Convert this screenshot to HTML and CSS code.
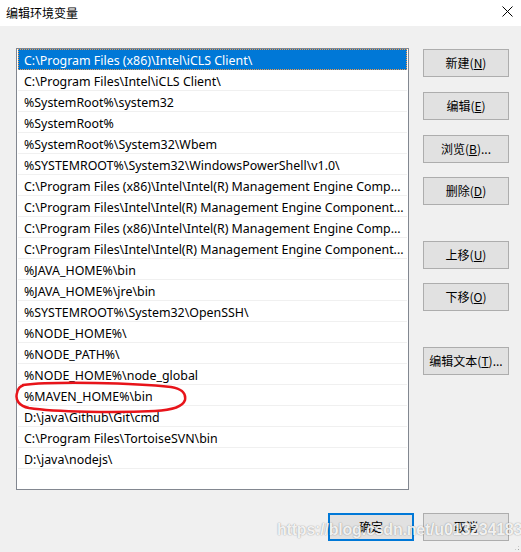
FILE: index.html
```html
<!DOCTYPE html>
<html lang="zh-CN">
<head>
<meta charset="utf-8">
<title>编辑环境变量</title>
<link rel="stylesheet" href="styles.css">
</head>
<body>
<div class="window">
  <div class="titlebar">
    <span class="title">编辑环境变量</span>
    <svg class="close" width="11" height="11" viewBox="0 0 11 11"><path d="M0.5 0.5 L10.5 10.5 M10.5 0.5 L0.5 10.5" stroke="#000" stroke-width="1" fill="none"/></svg>
  </div>
  <div class="body">
    <div class="main">
      <div class="listbox">
        <div class="row selected">C:\Program Files (x86)\Intel\iCLS Client\</div>
        <div class="row">C:\Program Files\Intel\iCLS Client\</div>
        <div class="row">%SystemRoot%\system32</div>
        <div class="row">%SystemRoot%</div>
        <div class="row">%SystemRoot%\System32\Wbem</div>
        <div class="row">%SYSTEMROOT%\System32\WindowsPowerShell\v1.0\</div>
        <div class="row">C:\Program Files (x86)\Intel\Intel(R) Management Engine Comp...</div>
        <div class="row">C:\Program Files\Intel\Intel(R) Management Engine Component...</div>
        <div class="row">C:\Program Files (x86)\Intel\Intel(R) Management Engine Comp...</div>
        <div class="row">C:\Program Files\Intel\Intel(R) Management Engine Component...</div>
        <div class="row">%JAVA_HOME%\bin</div>
        <div class="row">%JAVA_HOME%\jre\bin</div>
        <div class="row">%SYSTEMROOT%\System32\OpenSSH\</div>
        <div class="row">%NODE_HOME%\</div>
        <div class="row">%NODE_PATH%\</div>
        <div class="row">%NODE_HOME%\node_global</div>
        <div class="row">%MAVEN_HOME%\bin</div>
        <div class="row">D:\java\Github\Git\cmd</div>
        <div class="row">C:\Program Files\TortoiseSVN\bin</div>
        <div class="row">D:\java\nodejs\</div>
        <svg class="mark" width="180" height="40" viewBox="0 0 180 40">
          <path d="M8 5 C 40 1, 120 3, 156 7 C 168 9, 171 14, 170 20 C 168 26, 160 30, 140 31 C 100 33, 40 32, 14 28 C 4 26, 0 20, 2 13 C 3 8, 5 6, 9 5" stroke="#e8141a" stroke-width="2.5" fill="none" stroke-linecap="round"/>
        </svg>
      </div>
      <div class="buttons">
        <button class="btn b1">新建(<u>N</u>)</button>
        <button class="btn b2">编辑(<u>E</u>)</button>
        <button class="btn b3">浏览(<u>B</u>)...</button>
        <button class="btn b4">删除(<u>D</u>)</button>
        <button class="btn b5">上移(<u>U</u>)</button>
        <button class="btn b6">下移(<u>O</u>)</button>
        <button class="btn b7">编辑文本(<u>T</u>)...</button>
      </div>
    </div>
    <div class="footer">
      <button class="btn default">确定</button>
      <button class="btn">取消</button>
    </div>
    <div class="watermark">https://blog.csdn.net/u013234183</div>
    <div class="grip"></div>
  </div>
</div>
</body>
</html>
```

FILE: styles.css
```css
html, body {
  margin: 0;
  padding: 0;
  background: #f0f0f0;
}
body {
  font-family: "Noto Sans", "Noto Sans CJK SC", sans-serif;
  font-size: 12px;
  color: #000;
}
.window {
  width: 521px;
  height: 552px;
  display: flex;
  flex-direction: column;
  overflow: hidden;
}
.titlebar {
  height: 26px;
  background: #fff;
  display: flex;
  align-items: center;
  justify-content: space-between;
  padding: 0 8px 0 6px;
}
.title {
  font-family: "Noto Sans CJK SC", sans-serif;
  font-size: 12px;
  line-height: 12px;
}
.close {
  display: block;
  margin-top: -3px;
}
.body {
  position: relative;
  flex: 1;
  background: #f0f0f0;
}
.main {
  display: flex;
  padding-top: 22px;
}
.listbox {
  position: relative;
  margin-left: 16px;
  width: 391px;
  height: 440px;
  border: 1px solid #828790;
  background: #fff;
}
.row {
  height: 18px;
  padding-top: 2px;
  line-height: 20px;
  font-size: 12.4px;
  border-bottom: 1px solid #f0f0f0;
  margin: 0 1px;
  padding-left: 6px;
  white-space: nowrap;
  overflow: hidden;
}
.row.selected {
  background: #0078d7;
  color: #fff;
  border-bottom-color: #0078d7;
  outline: 1px dotted #f39b4a;
  outline-offset: -1px;
}
.mark {
  position: absolute;
  left: -2px;
  top: 331px;
}
.buttons {
  display: flex;
  flex-direction: column;
  margin-left: 14px;
  width: 86px;
}
.btn {
  width: 86px;
  height: 28px;
  padding: 0;
  background: #e1e1e1;
  border: 1px solid #adadad;
  font-family: "Noto Sans CJK SC", "Noto Sans", sans-serif;
  font-size: 12px;
  color: #000;
  line-height: 26px;
  text-align: center;
}
.btn u {
  text-decoration-thickness: 1px;
  text-underline-offset: 1px;
}
.b1 { margin-top: 1px; }
.b2 { margin-top: 15px; }
.b3 { margin-top: 15px; }
.b4 { margin-top: 14px; }
.b5 { margin-top: 36px; }
.b6 { margin-top: 14px; }
.b7 { margin-top: 36px; }
.footer {
  display: flex;
  justify-content: flex-end;
  gap: 9px;
  padding-right: 12px;
  margin-top: 23px;
}
.btn.default {
  border: 2px solid #0078d7;
  line-height: 24px;
}
.watermark {
  position: absolute;
  left: 277px;
  top: 495px;
  font-family: "Liberation Sans", Arial, sans-serif;
  font-size: 16px;
  font-weight: bold;
  letter-spacing: -0.2px;
  color: rgba(255, 255, 255, 0.9);
  text-shadow: 0 0 1px rgba(0, 0, 0, 0.35), 0 0 2px rgba(0, 0, 0, 0.15);
  pointer-events: none;
}
.grip {
  position: absolute;
  right: 1px;
  bottom: 1px;
  width: 6px;
  height: 6px;
  background:
    radial-gradient(circle, #a0a0a0 0.8px, transparent 1px) 0 0 / 3px 3px;
  clip-path: polygon(100% 0, 100% 100%, 0 100%);
}
```
